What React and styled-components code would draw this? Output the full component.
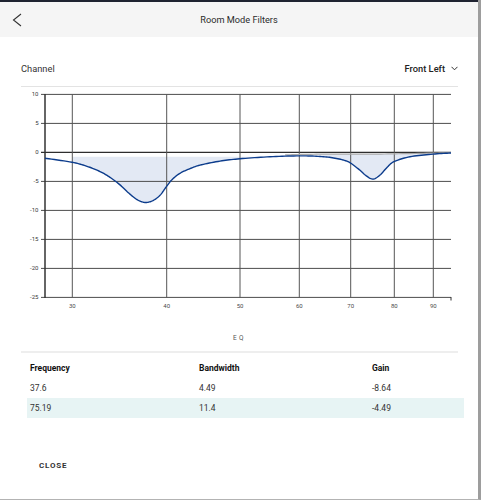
import React from "react";
import styled, { createGlobalStyle } from "styled-components";

const GlobalStyle = createGlobalStyle`
  html, body {
    margin: 0;
    padding: 0;
    background: #ffffff;
  }
  body {
    font-family: Roboto, "Liberation Sans", Arial, sans-serif;
    color: #222;
  }
`;

const Dialog = styled.div`
  box-sizing: border-box;
  width: 481px;
  height: 500px;
  border-right: 3px solid #9d9d9d;
  border-bottom: 1px solid #b3b3b3;
  display: flex;
  flex-direction: column;
  background: #fff;
  overflow: hidden;
`;

const TopStrip = styled.div`
  height: 2px;
  background: #1f2331;
`;

const Header = styled.div`
  height: 35px;
  background: #f5f5f5;
  display: grid;
  grid-template-columns: 40px 1fr 40px;
  align-items: center;
`;

const BackButton = styled.button`
  border: none;
  background: none;
  padding: 0 0 0 12px;
  height: 35px;
  display: flex;
  align-items: center;
  cursor: pointer;
`;

const Title = styled.div`
  text-align: center;
  font-size: 9.2px;
  color: #2b2b2b;
`;

const Body = styled.div`
  padding: 0 20px 0 21px;
  display: flex;
  flex-direction: column;
`;

const ChannelRow = styled.div`
  display: flex;
  justify-content: space-between;
  align-items: center;
  height: 16px;
  padding: 23px 0 10px;
  border-bottom: 1px solid #e3e3e3;
`;

const Label = styled.span`
  font-size: 9.3px;
  color: #333;
`;

const Select = styled.div`
  display: flex;
  align-items: center;
  gap: 6px;
  font-size: 9.3px;
  font-weight: 500;
  color: #222;
`;

const ChartSvg = styled.svg`
  display: block;
  width: 437px;
  height: 226px;
`;

const Caption = styled.div`
  margin-top: 19px;
  line-height: 12px;
  text-align: center;
  font-size: 6.5px;
  letter-spacing: 2.5px;
  color: #555;
`;

const Divider = styled.div`
  margin-top: 7px;
  height: 2px;
  background: #eeeeee;
`;

const Table = styled.div`
  margin: 4.5px -6px 0 6px;
  display: flex;
  flex-direction: column;
`;

const Row = styled.div`
  display: grid;
  grid-template-columns: 169px 173px 1fr;
  height: 20px;
  align-items: center;
  background: ${(p) => (p.$shaded ? "#e7f4f4" : "transparent")};
`;

const Cell = styled.div`
  padding-left: 3px;
  font-size: 8.5px;
  font-weight: ${(p) => (p.$head ? 700 : 400)};
  color: ${(p) => (p.$head ? "#111" : "#333")};
`;

const Footer = styled.div`
  margin-top: 33.5px;
  padding-left: 6px;
`;

const CloseButton = styled.button`
  height: 28px;
  border: none;
  background: none;
  padding: 0 12px;
  font-family: Roboto, "Liberation Sans", Arial, sans-serif;
  font-size: 8px;
  font-weight: 700;
  letter-spacing: 0.8px;
  color: #333;
  cursor: pointer;
`;

const ZERO = 152.4;
const PX_PER_DB = 5.8;
const toY = (db) => ZERO - db * PX_PER_DB;

const LEFT = 45;
const RIGHT = 451;
const yTicks = [10, 5, 0, -5, -10, -15, -20, -25];
const xTicks = [
  [30, 72.3],
  [40, 166.7],
  [50, 240],
  [60, 299.3],
  [70, 350.7],
  [80, 394.3],
  [90, 433.3],
];

const responsePts = [
  [45, -1.0], [72, -1.7], [87, -2.4], [100, -3.3], [110, -4.3], [120, -5.6],
  [128, -6.9], [135, -7.9], [140, -8.4], [146, -8.64], [153, -8.3], [160, -7.4],
  [166, -6.0], [172, -4.7], [180, -3.6], [190, -2.8], [200, -2.2], [220, -1.5],
  [240, -1.1], [270, -0.75], [299, -0.6], [320, -0.7], [335, -1.0], [348, -1.6],
  [358, -2.8], [366, -4.0], [373, -4.6], [380, -3.9], [387, -2.6], [394, -1.6],
  [410, -0.75], [433, -0.3], [451, -0.1],
];

const filterPts = [
  [285, -0.45], [300, -0.35], [330, -0.3], [373, -0.3], [410, -0.2], [451, -0.05],
];

function spline(pts, steps = 10) {
  const p = pts.map(([x, db]) => [x, toY(db)]);
  const out = [];
  for (let i = 0; i < p.length - 1; i++) {
    const p0 = p[Math.max(i - 1, 0)];
    const p1 = p[i];
    const p2 = p[i + 1];
    const p3 = p[Math.min(i + 2, p.length - 1)];
    for (let s = 0; s < steps; s++) {
      const t = s / steps;
      const t2 = t * t;
      const t3 = t2 * t;
      const f = (a, b, c, d) =>
        0.5 * (2 * b + (-a + c) * t + (2 * a - 5 * b + 4 * c - d) * t2 + (-a + 3 * b - 3 * c + d) * t3);
      out.push([f(p0[0], p1[0], p2[0], p3[0]), f(p0[1], p1[1], p2[1], p3[1])]);
    }
  }
  out.push(p[p.length - 1]);
  return out;
}

const line = (pts) => "M" + pts.map(([x, y]) => `${x.toFixed(2)},${y.toFixed(2)}`).join("L");

const response = spline(responsePts);
const filterLine = spline(filterPts);

const FILL_TOP = 156.7;
const fillOne = (() => {
  const seg = response
    .filter(([x]) => x >= 72 && x <= 255)
    .map(([x, y]) => [x, Math.max(y, FILL_TOP)]);
  return line([[72, FILL_TOP], ...seg, [255, FILL_TOP]]) + "Z";
})();

const fillTwo = (() => {
  const top = filterLine.filter(([x]) => x >= 318 && x <= 432);
  const bottom = response.filter(([x]) => x >= 318 && x <= 432).reverse();
  return line([...top, ...bottom]) + "Z";
})();

function Chart() {
  return (
    <ChartSvg viewBox="21 87 437 226">
      <path d={fillOne} fill="#e3e9f4" />
      <path d={fillTwo} fill="#e3e9f4" />
      {yTicks.map((v) => (
        <g key={v}>
          <line
            x1={41}
            x2={RIGHT}
            y1={toY(v)}
            y2={toY(v)}
            stroke={v === 0 ? "#2e2e2e" : "#4d4d4d"}
            strokeWidth={v === 0 ? 1.4 : 1}
          />
          <text x={38.5} y={toY(v) + 2} textAnchor="end" fontSize="6" fill="#3a3a3a" fontFamily="Roboto, Arial, sans-serif">
            {v}
          </text>
        </g>
      ))}
      {xTicks.map(([f, x]) => (
        <g key={f}>
          <line x1={x} x2={x} y1={94.4} y2={297.4} stroke="#555" strokeWidth="1" />
          <text x={x} y={308} textAnchor="middle" fontSize="6" fill="#4a4a4a" fontFamily="Roboto, Arial, sans-serif">
            {f}
          </text>
        </g>
      ))}
      <line x1={LEFT} x2={LEFT} y1={94} y2={298} stroke="#333" strokeWidth="1.5" />
      <line x1={RIGHT} x2={RIGHT} y1={297} y2={300.5} stroke="#333" strokeWidth="1" />
      <path d={line(filterLine)} fill="none" stroke="#a9a9a9" strokeWidth="1.2" />
      <path d={line(response)} fill="none" stroke="#0c3c8c" strokeWidth="1.4" />
    </ChartSvg>
  );
}

const rows = [
  { freq: "37.6", bw: "4.49", gain: "-8.64" },
  { freq: "75.19", bw: "11.4", gain: "-4.49" },
];

export default function App() {
  return (
    <>
      <GlobalStyle />
      <Dialog>
        <TopStrip />
        <Header>
          <BackButton aria-label="Back">
            <svg width="10" height="14" viewBox="0 0 10 14">
              <polyline points="9,1 1.5,7 9,13" fill="none" stroke="#333" strokeWidth="1.1" />
            </svg>
          </BackButton>
          <Title>Room Mode Filters</Title>
          <span />
        </Header>
        <Body>
          <ChannelRow>
            <Label>Channel</Label>
            <Select>
              Front Left
              <svg width="7" height="5" viewBox="0 0 7 5">
                <polyline points="0.5,0.8 3.5,3.8 6.5,0.8" fill="none" stroke="#333" strokeWidth="1" />
              </svg>
            </Select>
          </ChannelRow>
          <Chart />
          <Caption>EQ</Caption>
          <Divider />
          <Table>
            <Row>
              <Cell $head>Frequency</Cell>
              <Cell $head>Bandwidth</Cell>
              <Cell $head>Gain</Cell>
            </Row>
            {rows.map((r, i) => (
              <Row key={r.freq} $shaded={i % 2 === 1}>
                <Cell>{r.freq}</Cell>
                <Cell>{r.bw}</Cell>
                <Cell>{r.gain}</Cell>
              </Row>
            ))}
          </Table>
          <Footer>
            <CloseButton>CLOSE</CloseButton>
          </Footer>
        </Body>
      </Dialog>
    </>
  );
}
